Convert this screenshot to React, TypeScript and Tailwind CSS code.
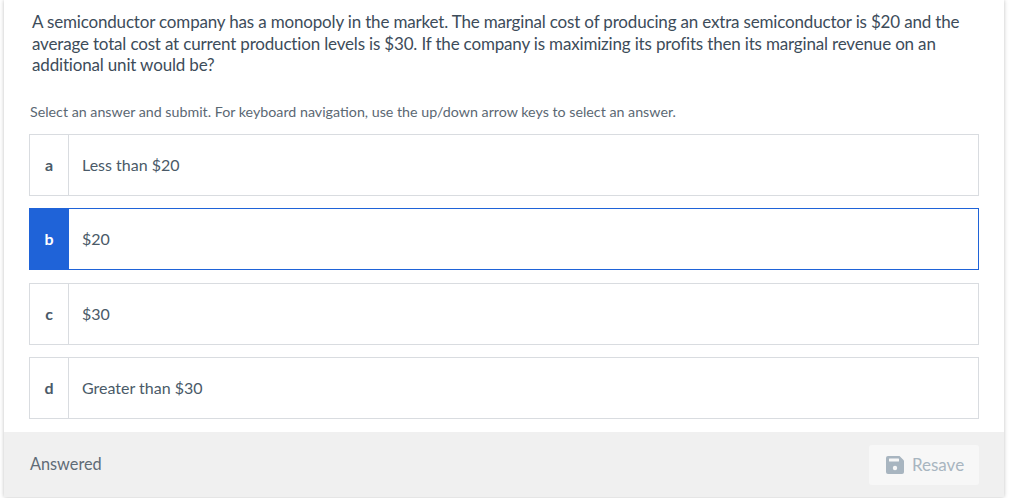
const F = { fontFamily: 'Lato, "Noto Sans", sans-serif' };
const options = [
  ["a", "Less than $20", false],
  ["b", "$20", true],
  ["c", "$30", false],
  ["d", "Greater than $30", false],
] as const;

export default function App() {
  return (
    <div className="w-[1033px] h-[498px] bg-white overflow-hidden" style={F}>
      <div className="w-[1000px] h-[497px] ml-[4px] flex flex-col shadow-[0_0_4px_rgba(0,0,0,0.25)] bg-white">
        <div className="flex-1 px-[25px] flex flex-col">
          <p className="mt-[11px] ml-[3px] w-[935px] text-[17px] leading-[21.6px] tracking-[-0.17px] text-[#3d4c5a]">
            A semiconductor company has a monopoly in the market. The marginal cost of producing an extra semiconductor is $20 and the average total cost at current production levels is $30. If the company is maximizing its profits then its marginal revenue on an additional unit would be?
          </p>
          <p className="mt-[26px] ml-[1px] text-[14.25px] leading-[20px] text-[#5b6873]">
            Select an answer and submit. For keyboard navigation, use the up/down arrow keys to select an answer.
          </p>
          <div className="mt-[12px] flex flex-col gap-[12.4px]">
            {options.map(([l, t, sel]) => (
              <div key={l} className={`h-[62px] flex border ${sel ? "border-[#1f63d8]" : "border-[#d9dce0]"}`}>
                <div className={`w-[39px] flex items-center justify-center text-[16px] font-bold border-r ${sel ? "bg-[#1f63d8] text-white border-[#1f63d8]" : "border-[#d9dce0] text-[#4a5a68]"}`}>{l}</div>
                <div className="flex items-center pl-[13px] text-[16px] text-[#4a5a68]">{t}</div>
              </div>
            ))}
          </div>
        </div>
        <div className="h-[65px] bg-[#f0f0f0] flex items-center justify-between px-[25px]">
          <span className="text-[16.3px] text-[#5f6b76] ml-[1px]">Answered</span>
          <div className="w-[110px] h-[40px] bg-[#f7f7f7] rounded-[3px] flex items-center justify-center gap-[8px] pl-[2px] text-[#a8b5c0] text-[17px]">
            <svg width="18" height="18" viewBox="0 0 18 18"><path fill="#a8b5c0" d="M2 0h11.5L18 4.5V16a2 2 0 0 1-2 2H2a2 2 0 0 1-2-2V2a2 2 0 0 1 2-2z"/><rect x="3" y="2.5" width="10" height="3" rx="0.5" fill="#f7f7f7"/><circle cx="9" cy="12" r="2.2" fill="#f7f7f7"/></svg>
            Resave
          </div>
        </div>
      </div>
    </div>
  );
}
